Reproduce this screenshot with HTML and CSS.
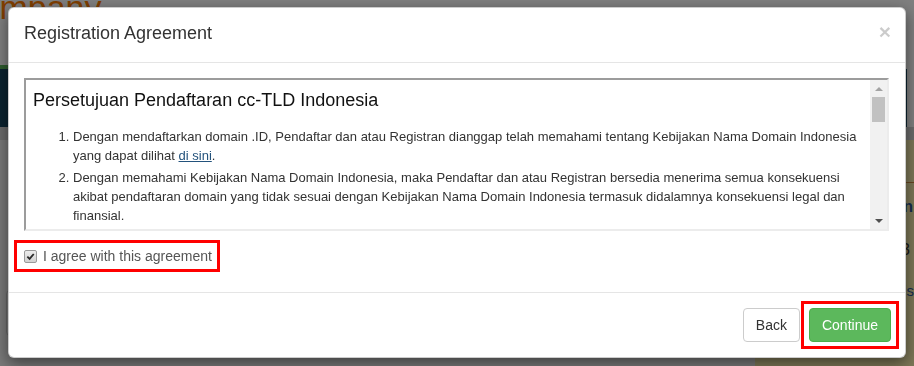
FILE: index.html
```html
<!DOCTYPE html>
<html lang="en">
<head>
<meta charset="UTF-8">
<title>Registration Agreement</title>
<meta name="viewport" content="width=device-width,initial-scale=1" />
<link rel="stylesheet" href="styles.css">
</head>
<body>

  <!-- the page behind the dialog -->
  <div class="page">
    <header class="site-header">
      <span class="logo">Company</span>
    </header>
    <div class="topline"></div>
    <div class="banner"></div>
    <nav class="nav"></nav>
    <div class="main">
      <div class="content">
        <div class="panel"></div>
      </div>
      <aside class="sidebar">
        <h4>Informasi</h4>
        <p class="side-title">Domain</p>
        <p class="side-price">Rp 3</p>
        <a class="side-link" href="#">Statistik</a>
      </aside>
    </div>
  </div>

  <div class="backdrop"></div>

  <div class="modal">
    <div class="modal-dialog">

      <div class="modal-header">
        <h4 class="modal-title">Registration Agreement</h4>
        <button class="close" type="button">&times;</button>
      </div>

      <div class="modal-body">
        <div class="agreement-box">
          <div class="agreement-text">
            <h3>Persetujuan Pendaftaran cc-TLD Indonesia</h3>
            <ol>
              <li>Dengan mendaftarkan domain .ID, Pendaftar dan atau Registran dianggap telah memahami tentang Kebijakan Nama Domain Indonesia yang dapat dilihat <a href="#">di sini</a>.</li>
              <li>Dengan memahami Kebijakan Nama Domain Indonesia, maka Pendaftar dan atau Registran bersedia menerima semua konsekuensi akibat pendaftaran domain yang tidak sesuai dengan Kebijakan Nama Domain Indonesia termasuk didalamnya konsekuensi legal dan finansial.</li>
              <li>Pendaftar dan atau Registran bertanggung jawab atas kebenaran data yang diberikan pada saat pendaftaran nama domain.</li>
            </ol>
          </div>
          <div class="scrollbar">
            <span class="sb-button"><span class="arrow-up"></span></span>
            <span class="sb-track"><span class="sb-thumb"></span></span>
            <span class="sb-button"><span class="arrow-down"></span></span>
          </div>
        </div>

        <label class="agree">
          <span class="checkbox">
            <svg viewBox="0 0 10 10" width="9" height="9"><path d="M1.5 5.2 L4 7.6 L8.6 2.2" fill="none" stroke="#2b2b2b" stroke-width="2"/></svg>
          </span>
          I agree with this agreement
        </label>
      </div>

      <div class="modal-footer">
        <button class="btn btn-default" type="button">Back</button>
        <span class="highlight">
          <button class="btn btn-success" type="button">Continue</button>
        </span>
      </div>

    </div>
  </div>

</body>
</html>
```

FILE: styles.css
```css
body {
  margin: 0;
  font-family: "Liberation Sans", Arial, sans-serif;
  font-size: 14px;
  color: #333;
  overflow: hidden;
}

/* page behind the dialog */
.page {
  height: 366px;
  display: flex;
  flex-direction: column;
  background: #fff;
}
.site-header {
  height: 65px;
  overflow: hidden;
}
.logo {
  display: block;
  margin: -10px 0 0 -44px;
  font-size: 34px;
  line-height: 34px;
  color: #ff7c00;
}
.topline {
  height: 4px;
  background: linear-gradient(90deg, #5cb85c 60%, #fff 60%);
}
.banner {
  height: 58px;
  background: linear-gradient(180deg, #17465f 0, #17465f 100%);
  background-color: #17465f;
  box-shadow: inset -200px 7px 0 -193px #fff;
}
.nav {
  height: 13px;
  background: #d6d6d6;
}
.main {
  flex: 1;
  display: flex;
}
.content {
  flex: 1;
  background: #f2f2f2;
  padding-top: 150px;
}
.panel {
  height: 44px;
  margin-left: 6px;
  width: 720px;
  border: 1px solid #ccc;
  border-radius: 4px;
  background: #fff;
}
.sidebar {
  width: 159px;
  background: #faeeae;
  padding-top: 20px;
  box-sizing: border-box;
  overflow: hidden;
  white-space: nowrap;
  text-align: right;
}
.sidebar h4 {
  margin: 0;
  line-height: 22px;
  border-bottom: 1px solid #d08a40;
  font-size: 16px;
  color: #faeeae;
}
.sidebar p {
  margin: 0;
  line-height: 20px;
}
.side-title {
  margin-top: 14px !important;
  padding-right: 1px;
  font-size: 16px;
  font-weight: bold;
  color: #2e5b9c;
}
.side-price {
  margin-top: 23px !important;
  padding-right: 4px;
  font-size: 16px;
  color: #333;
}
.side-link {
  display: block;
  margin: 21px -15px 0 0;
  line-height: 20px;
  font-size: 15px;
  color: #2e5b9c;
  text-decoration: none;
}

.backdrop {
  position: fixed;
  top: 0;
  left: 0;
  right: 0;
  bottom: 0;
  background: rgba(0, 0, 0, .5);
}

/* dialog */
.modal {
  position: fixed;
  top: 0;
  left: 0;
  right: 0;
  bottom: 0;
  padding: 7px 8px 0;
}
.modal-dialog {
  width: 898px;
  box-sizing: border-box;
  background: #fff;
  border: 1px solid rgba(0, 0, 0, .2);
  border-radius: 6px;
  box-shadow: 0 5px 15px rgba(0, 0, 0, .5);
}
.modal-header {
  display: flex;
  justify-content: space-between;
  align-items: center;
  padding: 13px 16px 16px 15px;
  border-bottom: 1px solid #e5e5e5;
}
.modal-title {
  margin: 0;
  font-size: 18px;
  font-weight: normal;
  line-height: 25px;
  color: #333;
}
.close {
  padding: 0;
  margin: -4px -2px 0 0;
  border: 0;
  background: none;
  font-family: "Liberation Sans", Arial, sans-serif;
  font-size: 21px;
  font-weight: bold;
  line-height: 1;
  color: #000;
  opacity: .2;
}

.modal-body {
  padding: 15px 16px 15px 15px;
}
.agreement-box {
  display: flex;
  height: 153px;
  box-sizing: border-box;
  border: 2px solid;
  border-color: #9c9c9c #ececec #ececec #9c9c9c;
}
.agreement-text {
  flex: 1;
  overflow: hidden;
  padding: 0 8px 0 7px;
  font-size: 13px;
  color: #333;
}
.agreement-text h3 {
  margin: 10px 0 17px;
  font-size: 18px;
  font-weight: normal;
  line-height: 20px;
  color: #111;
}
.agreement-text ol {
  margin: 0;
  padding-left: 40px;
}
.agreement-text li {
  line-height: 19px;
  margin-bottom: 3px;
}
.agreement-text a {
  color: #23527c;
  text-decoration: underline;
}

.scrollbar {
  width: 17px;
  display: flex;
  flex-direction: column;
  background: #f1f1f1;
}
.sb-button {
  height: 17px;
  display: flex;
  align-items: center;
  justify-content: center;
}
.arrow-up {
  border: 4px solid transparent;
  border-top: 0;
  border-bottom: 4px solid #a3a3a3;
}
.arrow-down {
  border: 4px solid transparent;
  border-bottom: 0;
  border-top: 4px solid #505050;
}
.sb-track {
  flex: 1;
  padding: 0 2px;
}
.sb-thumb {
  display: block;
  height: 25px;
  background: #c1c1c1;
}

.agree {
  display: inline-flex;
  align-items: center;
  gap: 6px;
  margin: 9px 0 5px -10px;
  padding: 3px 5px 3px 7px;
  border: 3px solid #f00;
  font-size: 14px;
  line-height: 20px;
  color: #555;
}
.checkbox {
  width: 11px;
  height: 11px;
  display: flex;
  align-items: center;
  justify-content: center;
  border: 1px solid #9a9a9a;
  border-radius: 2px;
  background: linear-gradient(#ececec, #d2d2d2);
}

.modal-footer {
  display: flex;
  justify-content: flex-end;
  align-items: center;
  padding: 15px 14px 15px 15px;
  border-top: 1px solid #e5e5e5;
}
.btn {
  padding: 6px 12px;
  border: 1px solid transparent;
  border-radius: 4px;
  font-family: "Liberation Sans", Arial, sans-serif;
  font-size: 14px;
  line-height: 20px;
}
.btn-default {
  background: #fff;
  border-color: #ccc;
  color: #333;
}
.btn-success {
  background: #5cb85c;
  border-color: #4cae4c;
  color: #fff;
}
.highlight {
  display: inline-flex;
  margin: -7px -8px -7px 1px;
  padding: 4px 5px;
  border: 3px solid #f00;
}
```
